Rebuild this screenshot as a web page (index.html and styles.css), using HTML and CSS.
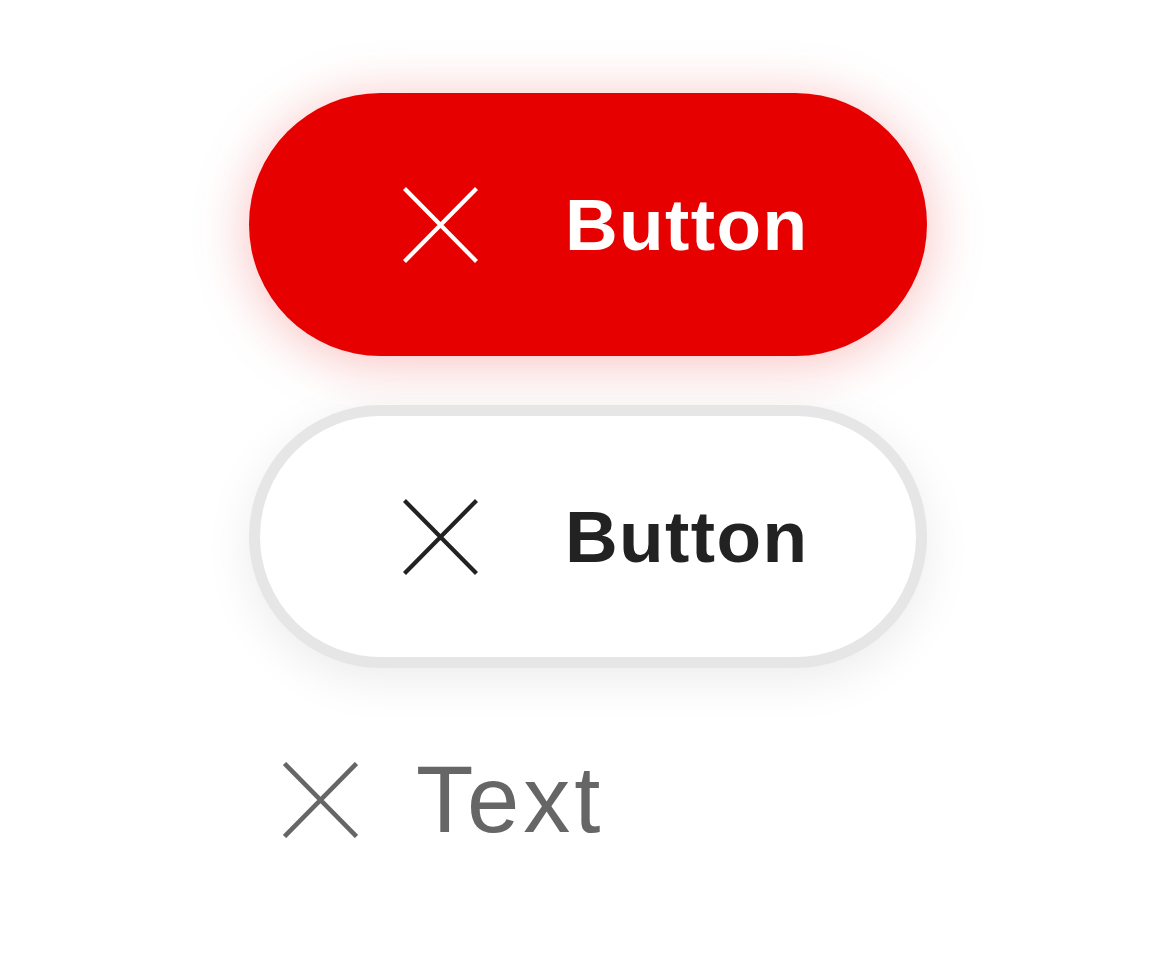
FILE: index.html
```html
<!DOCTYPE html>
<html>
<head>
<meta charset="utf-8">
<link rel="stylesheet" href="styles.css">
</head>
<body>
<div class="stack">
  <button class="btn btn-primary">
    <svg class="icon" viewBox="0 0 75 76"><path d="M1.5 1.5 L73.5 74.5 M73.5 1.5 L1.5 74.5" /></svg>
    <span class="label">Button</span>
  </button>
  <button class="btn btn-secondary">
    <svg class="icon" viewBox="0 0 75 76"><path d="M1.5 1.5 L73.5 74.5 M73.5 1.5 L1.5 74.5" /></svg>
    <span class="label">Button</span>
  </button>
  <div class="text-row">
    <svg class="icon" viewBox="0 0 75 76"><path d="M1.5 1.5 L73.5 74.5 M73.5 1.5 L1.5 74.5" /></svg>
    <span class="text-label">Text</span>
  </div>
</div>
</body>
</html>
```
FILE: styles.css
```css
html, body {
  margin: 0;
  padding: 0;
  background: #ffffff;
}
body {
  width: 1173px;
  height: 976px;
  overflow: hidden;
  font-family: "Liberation Sans", Arial, sans-serif;
}
.stack {
  display: flex;
  flex-direction: column;
  align-items: flex-start;
  padding-top: 93px;
  padding-left: 249px;
}
.btn {
  box-sizing: border-box;
  width: 678px;
  height: 263px;
  border-radius: 132px;
  display: flex;
  align-items: center;
  padding: 0 0 0 154px;
  margin: 0;
  font-family: "Liberation Sans", Arial, sans-serif;
  cursor: pointer;
}
.btn .icon {
  width: 75px;
  height: 76px;
  flex: none;
  margin-right: 87px;
  fill: none;
  stroke-width: 4.2;
}
.label {
  font-size: 73px;
  font-weight: 700;
  line-height: 1;
  letter-spacing: 1.4px;
}
.btn-primary {
  background: #e60000;
  border: none;
  box-shadow: 0 6px 56px rgba(230, 0, 0, 0.26);
}
.btn-primary .icon { stroke: #ffffff; }
.btn-primary .label { color: #ffffff; }
.btn-secondary {
  margin-top: 49px;
  background: #ffffff;
  border: 11px solid #e6e6e6;
  padding-left: 143px;
  box-shadow: 0 12px 48px rgba(0, 0, 0, 0.08);
}
.btn-secondary .icon { stroke: #222222; }
.btn-secondary .label { color: #222222; }
.text-row {
  display: flex;
  align-items: center;
  margin-top: 85px;
  margin-left: 34px;
  height: 94px;
}
.text-row .icon {
  width: 75px;
  height: 76px;
  flex: none;
  fill: none;
  stroke: #666666;
  stroke-width: 4.6;
  margin-right: 58px;
}
.text-label {
  font-size: 94px;
  font-weight: 400;
  line-height: 1;
  letter-spacing: 4px;
  color: #666666;
}
```
